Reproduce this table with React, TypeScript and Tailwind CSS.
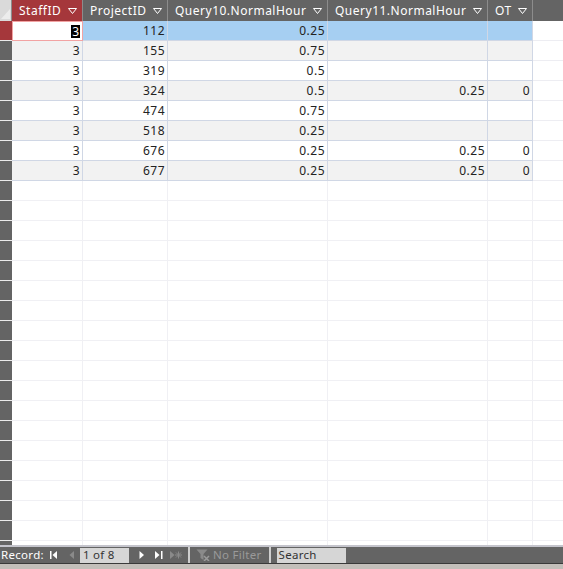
import React from "react";

const cols = [
  { name: "StaffID", w: "w-[71px]" },
  { name: "ProjectID", w: "w-[85px]" },
  { name: "Query10.NormalHour", w: "w-[160px]" },
  { name: "Query11.NormalHour", w: "w-[160px]" },
  { name: "OT", w: "w-[45px]" },
];

const rows: string[][] = [
  ["3", "112", "0.25", "", ""],
  ["3", "155", "0.75", "", ""],
  ["3", "319", "0.5", "", ""],
  ["3", "324", "0.5", "0.25", "0"],
  ["3", "474", "0.75", "", ""],
  ["3", "518", "0.25", "", ""],
  ["3", "676", "0.25", "0.25", "0"],
  ["3", "677", "0.25", "0.25", "0"],
];

function DropArrow() {
  return (
    <svg width="9" height="6" viewBox="0 0 9 6" className="shrink-0">
      <path d="M0.5 0.5 H8.5 L4.5 5.5 Z" fill="none" stroke="#ffffff" strokeWidth="1" />
    </svg>
  );
}

export default function App() {
  return (
    <div
      className="w-[563px] h-[569px] flex flex-col overflow-hidden bg-white text-[12px] text-[#222]"
      style={{ fontFamily: "'Noto Sans', 'DejaVu Sans', sans-serif" }}
    >
      {/* Datasheet grid */}
      <div className="h-[545px] overflow-hidden flex flex-col tracking-[0.5px]">
        {/* Header */}
        <div className="flex h-[21px] shrink-0 bg-[#646464] text-white">
          <div className="w-[12px] h-full bg-[#dadada] relative border-r border-[#8c8c8c]">
            <svg width="11" height="21" viewBox="0 0 11 21" className="absolute inset-0">
              <path d="M10 9 L10 19 L1 19 Z" fill="#ececec" />
            </svg>
          </div>
          {cols.map((c, i) => (
            <div
              key={c.name}
              className={`${c.w} h-full flex items-center justify-between pl-[7px] pr-[5px] border-r border-[#8c8c8c] ${
                i === 0 ? "bg-[#a5373b]" : ""
              }`}
            >
              <span className="leading-none">{c.name}</span>
              <DropArrow />
            </div>
          ))}
          <div className="flex-1" />
        </div>

        {/* Data rows */}
        {rows.map((r, ri) => {
          const sel = ri === 0;
          const alt = ri % 2 === 1;
          return (
            <div key={ri} className="flex h-[20px] shrink-0">
              <div
                className={`w-[12px] h-full border-b border-[#eaeaea] ${sel ? "bg-[#a5373b]" : "bg-[#646464]"}`}
              />
              {r.map((v, ci) => {
                if (sel && ci === 0) {
                  return (
                    <div
                      key={ci}
                      className={`${cols[ci].w} h-full flex items-center justify-end pr-[2px] bg-white border border-[#f2a3a3]`}
                    >
                      <span className="bg-black text-white leading-[13px] px-[1px] tracking-normal">{v}</span>
                    </div>
                  );
                }
                return (
                  <div
                    key={ci}
                    className={`${cols[ci].w} h-full flex items-center justify-end pr-[2px] border-r border-b border-[#d0d7e5] ${
                      sel ? "bg-[#a6cff2]" : alt ? "bg-[#f2f2f2]" : "bg-white"
                    }`}
                  >
                    <span className="leading-none">{v}</span>
                  </div>
                );
              })}
              <div className="flex-1 h-full border-b border-[#ededf2]" />
            </div>
          );
        })}

        {/* Empty rows */}
        {Array.from({ length: 19 }).map((_, ri) => (
          <div key={"e" + ri} className="flex h-[20px] shrink-0">
            <div className="w-[12px] h-full bg-[#646464] border-b border-[#eaeaea]" />
            {cols.map((c) => (
              <div key={c.name} className={`${c.w} h-full border-r border-b border-[#f0f0f4]`} />
            ))}
            <div className="flex-1 h-full border-b border-[#f0f0f4]" />
          </div>
        ))}
      </div>

      {/* Navigation bar */}
      <div className="h-[18px] shrink-0 flex items-center bg-[#646464] border-t-2 border-[#c4c4cc] text-white text-[11.5px] tracking-[0.3px]">
        <span className="leading-none ml-[1px]">Record:</span>
        <svg width="8" height="8" viewBox="0 0 8 8" className="ml-[6px]">
          <rect x="0" y="0" width="1.5" height="8" fill="#fff" />
          <path d="M7 0 V8 L2.5 4 Z" fill="#fff" />
        </svg>
        <svg width="6" height="8" viewBox="0 0 6 8" className="ml-[11px]">
          <path d="M5 0 V8 L0.5 4 Z" fill="#8a8a8a" />
        </svg>
        <div className="ml-[5px] w-[49px] h-[15px] bg-[#d6d6d6] text-[#333] flex items-center pl-[3px]">
          <span className="leading-none">1 of 8</span>
        </div>
        <svg width="6" height="8" viewBox="0 0 6 8" className="ml-[10px]">
          <path d="M0.5 0 V8 L5 4 Z" fill="#fff" />
        </svg>
        <svg width="8" height="8" viewBox="0 0 8 8" className="ml-[10px]">
          <path d="M0 0 V8 L4.5 4 Z" fill="#fff" />
          <rect x="6" y="0" width="1.5" height="8" fill="#fff" />
        </svg>
        <svg width="12" height="8" viewBox="0 0 12 8" className="ml-[7px]">
          <path d="M0 0 V8 L4.5 4 Z" fill="#8a8a8a" />
          <path d="M8.5 0.5 V7.5 M5 4 H12 M6 1.5 L11 6.5 M11 1.5 L6 6.5" stroke="#8a8a8a" strokeWidth="1" />
        </svg>
        <div className="ml-[6px] h-full border-l-2 border-[#cfcfcf]" />
        <svg width="14" height="12" viewBox="0 0 14 12" className="ml-[6px]">
          <path d="M0.5 0.5 H11.5 L7.5 5 V11 L4.5 9 V5 Z" fill="#8a8a8a" />
          <path d="M8 7 L13 12 M13 7 L8 12" stroke="#9a9a9a" strokeWidth="1.5" />
        </svg>
        <span className="leading-none ml-[3px] text-[#9a9a9a]">No Filter</span>
        <div className="ml-[7px] h-full border-l-2 border-[#cfcfcf]" />
        <div className="ml-[6px] w-[69px] h-[15px] bg-[#d6d6d6] text-[#333] flex items-center pl-[2px]">
          <span className="leading-none">Search</span>
        </div>
        <div className="flex-1" />
      </div>
      <div className="h-[1px] shrink-0 bg-[#3a3a3a]" />
      <div className="flex-1 bg-[#c3bfba]" />
    </div>
  );
}
